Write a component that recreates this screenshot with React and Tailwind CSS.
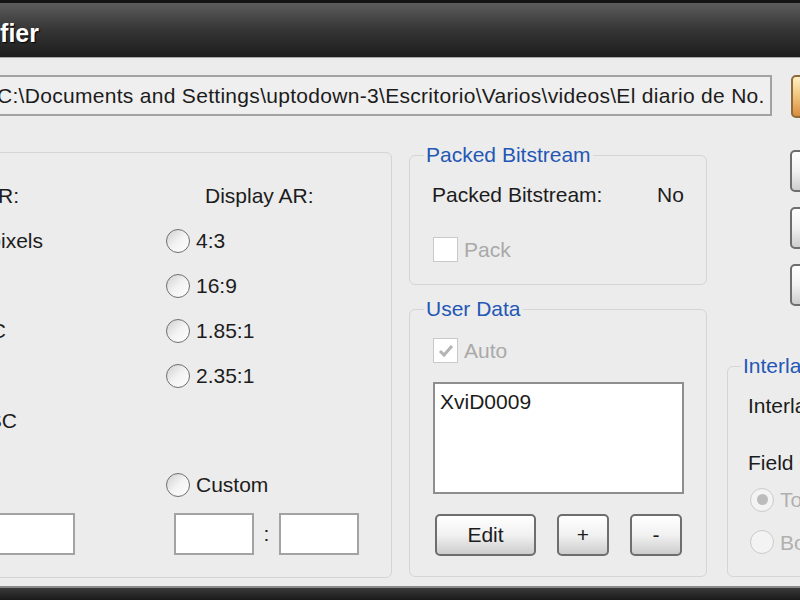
import React from 'react';

const font = { fontFamily: '"Liberation Sans", Arial, sans-serif' };

const Radio = ({ disabled, checked }) => (
    <span
        className={
            disabled
                ? 'flex h-[24px] w-[24px] shrink-0 items-center justify-center rounded-full border-[1.5px] border-[#cacaca] bg-[#f3f3f3]'
                : 'flex h-[24px] w-[24px] shrink-0 items-center justify-center rounded-full border-[1.5px] border-[#6f6f6f] bg-gradient-to-br from-[#cfcfcf] via-[#f3f3f3] to-white'
        }
    >
        {checked && <span className="h-[11px] w-[11px] rounded-full bg-[#bcbcbc]" />}
    </span>
);

const Check = ({ checked }) => (
    <span className="flex h-[25px] w-[25px] shrink-0 items-center justify-center border-[1.5px] border-[#c9c9c9] bg-white">
        {checked && (
            <svg width="16" height="14" viewBox="0 0 16 14">
                <path d="M2 7 L6 11 L14 2" fill="none" stroke="#b4b4b4" strokeWidth="3" />
            </svg>
        )}
    </span>
);

const WinButton = ({ className, children }) => (
    <div
        className={`flex items-center justify-center rounded-[5px] border-[2px] border-[#6e6e6e] bg-gradient-to-b from-white via-[#f1f1f1] to-[#cdcdcd] text-[21px] text-[#1c1c1c] ${className}`}
    >
        {children}
    </div>
);

const TextBox = ({ className }) => (
    <div className={`border-[2px] border-[#a3a3a3] bg-white ${className}`} />
);

const RadioRow = ({ label }) => (
    <div className="flex h-[45px] items-center gap-[6px]">
        <Radio />
        <span>{label}</span>
    </div>
);

const Legend = ({ children, className }) => (
    <legend className={`px-[2px] text-[21px] leading-[24px] text-[#2457b5] ${className}`}>{children}</legend>
);

const App = () => {
    return (
        <div className="flex h-[600px] w-[800px] flex-col overflow-hidden bg-[#ececec] text-[21px] text-[#1c1c1c]" style={font}>
            {/* title bar */}
            <div className="flex h-[58px] shrink-0 items-center border-t-[3px] border-b border-t-[#141414] border-b-[#a8a8a8] bg-gradient-to-b from-[#5d5d5d] via-[#353535] to-[#1d1d1d] pt-[8px]">
                <div className="flex w-[39px] justify-end whitespace-nowrap">
                    <span className="text-[25px] font-bold text-white [text-shadow:1px_1px_1px_#000]">MPEG4 Modifier</span>
                </div>
            </div>

            {/* file path */}
            <div className="mt-[17px] flex items-start">
                <div className="-ml-[10px] flex h-[41px] w-[782px] shrink-0 items-center overflow-hidden whitespace-nowrap border-[2px] border-[#a2a2a2] bg-[#efefef] pl-[5px] tracking-[0.3px]">
                    C:\Documents and Settings\uptodown-3\Escritorio\Varios\videos\El diario de No.
                </div>
                <div className="ml-[19px] h-[43px] w-[30px] shrink-0 rounded-[5px] border-[2px] border-[#8d6b3c] bg-gradient-to-b from-[#fff0c4] via-[#f0c37a] to-[#d88c3e]" />
            </div>

            {/* main */}
            <div className="mt-[25px] -ml-[30px] flex items-start">
                {/* aspect ratio group */}
                <div className="mt-[9px] flex h-[426px] w-[422px] shrink-0 rounded-[6px] border border-[#d5d5d5] pt-[20px]">
                    <div className="flex w-[195px] shrink-0 flex-col whitespace-nowrap">
                        <div className="flex h-[45px] w-[48px] items-center justify-end">Pixel AR:</div>
                        <div className="flex h-[45px] w-[72px] items-center justify-end gap-[6px]">
                            <Radio />
                            <span>Square pixels</span>
                        </div>
                        <div className="flex h-[45px] w-[20px] items-center justify-end">PAL</div>
                        <div className="flex h-[45px] w-[35px] items-center justify-end">NTSC</div>
                        <div className="flex h-[45px] w-[20px] items-center justify-end">PAL</div>
                        <div className="flex h-[45px] w-[46px] items-center justify-end">Wide NTSC</div>
                        <div className="mt-[70px] flex w-[104px] justify-end">
                            <TextBox className="h-[42px] w-[120px] shrink-0" />
                        </div>
                    </div>
                    <div className="flex flex-col">
                        <div className="flex h-[45px] items-center pl-[39px]">Display AR:</div>
                        <RadioRow label="4:3" />
                        <RadioRow label="16:9" />
                        <RadioRow label="1.85:1" />
                        <RadioRow label="2.35:1" />
                        <div className="mt-[65px] flex h-[44px] items-center gap-[6px]">
                            <Radio />
                            <span>Custom</span>
                        </div>
                        <div className="mt-[6px] ml-[8px] flex items-center">
                            <TextBox className="h-[42px] w-[80px]" />
                            <span className="w-[25px] text-center">:</span>
                            <TextBox className="h-[42px] w-[80px]" />
                        </div>
                    </div>
                </div>

                {/* middle column */}
                <div className="ml-[17px] flex w-[298px] shrink-0 flex-col">
                    <fieldset className="h-[142px] rounded-[6px] border border-[#d5d5d5]">
                        <Legend className="ml-[14px]">Packed Bitstream</Legend>
                        <div className="mt-[16px] flex h-[24px] items-center pl-[22px]">
                            <span className="w-[225px]">Packed Bitstream:</span>
                            <span>No</span>
                        </div>
                        <div className="mt-[27px] flex items-center gap-[6px] pl-[23px] text-[#a9a9a9]">
                            <Check />
                            <span>Pack</span>
                        </div>
                    </fieldset>

                    <fieldset className="mt-[12px] h-[280px] rounded-[6px] border border-[#d5d5d5]">
                        <Legend className="ml-[14px]">User Data</Legend>
                        <div className="mt-[14px] flex items-center gap-[6px] pl-[23px] text-[#a9a9a9]">
                            <Check checked />
                            <span>Auto</span>
                        </div>
                        <div className="mt-[15px] ml-[23px] h-[112px] w-[251px] border-[2px] border-[#8e8e8e] bg-white px-[5px] pt-[6px] leading-[24px]">
                            XviD0009
                        </div>
                        <div className="mt-[20px] ml-[25px] flex">
                            <WinButton className="h-[42px] w-[101px]">Edit</WinButton>
                            <WinButton className="ml-[21px] h-[42px] w-[52px]">+</WinButton>
                            <WinButton className="ml-[21px] h-[42px] w-[52px]">-</WinButton>
                        </div>
                    </fieldset>
                </div>

                {/* right column */}
                <div className="ml-[20px] flex w-[200px] shrink-0 flex-col whitespace-nowrap">
                    <div className="ml-[63px] mt-[7px] flex flex-col gap-[15px]">
                        <WinButton className="h-[42px] w-[90px]">OK</WinButton>
                        <WinButton className="h-[42px] w-[90px]">Cancel</WinButton>
                        <WinButton className="h-[42px] w-[90px]">Apply</WinButton>
                    </div>
                    <fieldset className="mt-[48px] h-[223px] rounded-[6px] border border-[#d5d5d5]">
                        <Legend className="ml-[13px]">Interlacing</Legend>
                        <div className="mt-[16px] flex h-[24px] items-center pl-[20px]">Interlaced:</div>
                        <div className="mt-[33px] flex h-[24px] items-center pl-[20px]">Field Order:</div>
                        <div className="mt-[9px] flex items-center gap-[6px] pl-[22px] text-[#b0b0b0]">
                            <Radio disabled checked />
                            <span>Top field first</span>
                        </div>
                        <div className="mt-[11px] flex items-center gap-[6px] pl-[22px] text-[#b0b0b0]">
                            <Radio disabled />
                            <span>Bottom field first</span>
                        </div>
                    </fieldset>
                </div>
            </div>

            <div className="flex-1" />
            {/* window bottom edge */}
            <div className="h-[14px] shrink-0 border-t-[2px] border-t-[#8a8a8a] bg-gradient-to-b from-[#3a3a3a] to-[#1a1a1a]" />
        </div>
    );
};

export default App;
